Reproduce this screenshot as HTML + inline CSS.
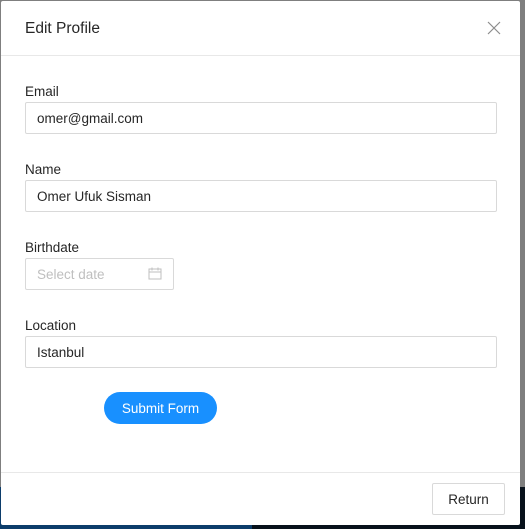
<!DOCTYPE html>
<html><head><style>
body{margin:0;width:525px;height:529px;overflow:hidden;background:#7f7f7f;font-family:"Liberation Sans",sans-serif;position:relative}
.bot1{position:absolute;left:0;top:487px;width:252px;height:42px;background:#0c3d6b}
.bot2{position:absolute;left:252px;top:487px;width:273px;height:42px;background:#07111b}
.modal{position:absolute;left:1px;top:1px;width:519px;height:524px;background:#fff;border-radius:2px}
.hdr{height:54px;border-bottom:1px solid #e8e8e8;position:relative}
.title{position:absolute;left:24px;top:19px;font-size:15.5px;color:#262626}
.x{position:absolute;left:486px;top:20px}
.lbl{position:absolute;left:24px;font-size:13.5px;color:#262626}
.inp{position:absolute;left:24px;width:470px;height:30px;border:1px solid #d9d9d9;border-radius:2px;font-size:13.5px;color:#262626;line-height:31px;box-sizing:content-box}
.inp span{margin-left:11px}
.btn{position:absolute;left:103px;top:391px;width:113px;height:32px;border-radius:16px;background:#1890ff;color:#fff;font-size:13.5px;text-align:center;line-height:33px}
.ftr{position:absolute;left:0;top:471px;width:519px;border-top:1px solid #e8e8e8}
.ret{position:absolute;left:431px;top:482px;width:71px;height:30px;border:1px solid #d9d9d9;border-radius:2px;font-size:13.5px;color:#262626;text-align:center;line-height:31px}
</style></head><body>
<div class="bot1"></div><div class="bot2"></div>
<div class="modal">
<div class="hdr"><div class="title">Edit Profile</div>
<svg class="x" width="14" height="14" viewBox="0 0 14 14"><path d="M1 1L13 13M13 1L1 13" stroke="#8c8c8c" stroke-width="1.2"/></svg></div>
<div class="lbl" style="top:83px">Email</div>
<div class="inp" style="top:101px"><span>omer@gmail.com</span></div>
<div class="lbl" style="top:161px">Name</div>
<div class="inp" style="top:179px"><span>Omer Ufuk Sisman</span></div>
<div class="lbl" style="top:239px">Birthdate</div>
<div class="inp" style="top:257px;width:147px;color:#bfbfbf"><span>Select date</span>
<svg style="position:absolute;left:122px;top:8px" width="14" height="13" viewBox="0 0 14 13"><rect x="1" y="2" width="12" height="10" fill="none" stroke="#bfbfbf"/><path d="M1 5h12M4 0.5v3M10 0.5v3" stroke="#bfbfbf"/></svg></div>
<div class="lbl" style="top:317px">Location</div>
<div class="inp" style="top:335px"><span>Istanbul</span></div>
<div class="btn">Submit Form</div>
<div class="ftr"></div>
<div class="ret">Return</div>
</div>
</body></html>
